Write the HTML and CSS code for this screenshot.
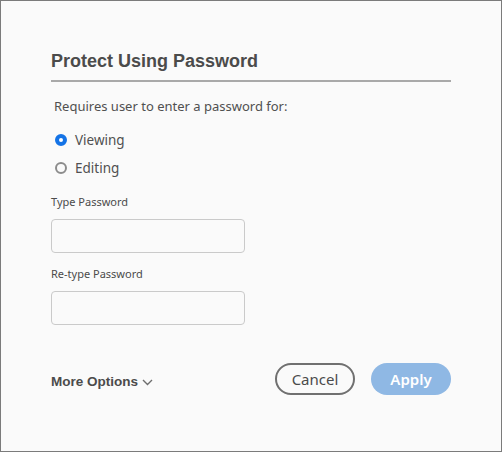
FILE: index.html
```html
<!DOCTYPE html>
<html>
<head>
<meta charset="utf-8">
<link rel="stylesheet" href="styles.css">
</head>
<body>
<div class="dialog">
  <h1 class="title">Protect Using Password</h1>
  <p class="intro">Requires user to enter a password for:</p>
  <div class="radios">
    <label class="radio"><span class="dot checked"></span><span>Viewing</span></label>
    <label class="radio"><span class="dot"></span><span>Editing</span></label>
  </div>
  <div class="field">
    <div class="label">Type Password</div>
    <div class="input"></div>
  </div>
  <div class="field">
    <div class="label">Re-type Password</div>
    <div class="input"></div>
  </div>
  <div class="footer">
    <div class="more">More Options
      <svg class="chev" width="11" height="7" viewBox="0 0 11 7"><path d="M1 1 L5.5 5.5 L10 1" fill="none" stroke="#6e6e6e" stroke-width="1.4"/></svg>
    </div>
    <div class="buttons">
      <button class="btn cancel">Cancel</button>
      <button class="btn apply">Apply</button>
    </div>
  </div>
</div>
</body>
</html>
```
FILE: styles.css
```css
html, body { margin: 0; padding: 0; }
body { width: 502px; height: 452px; overflow: hidden; }
.dialog {
  box-sizing: border-box;
  width: 502px; height: 452px;
  border: 1px solid #7b7b7b;
  background: #fafafa;
  padding: 49px 50px 0 50px;
  font-family: "Noto Sans", "Open Sans", sans-serif;
  color: #505050;
}
.title {
  margin: 0;
  font-family: "Liberation Sans", Arial, sans-serif;
  font-weight: bold;
  font-size: 18px;
  line-height: 22px;
  color: #4b4b4b;
  padding-bottom: 8px;
  border-bottom: 2px solid #a9a9a9;
}
.intro {
  margin: 14px 0 0 3px;
  font-size: 13px;
  line-height: 20px;
}
.radios { margin-top: 14px; display: flex; flex-direction: column; gap: 8px; }
.radio { display: flex; align-items: center; gap: 8px; font-size: 13.5px; line-height: 20px; padding-left: 4px; }
.dot {
  box-sizing: border-box;
  width: 12px; height: 12px; border-radius: 50%;
  border: 2px solid #8c8c8c;
  background: #fafafa;
}
.dot.checked { border: 4px solid #1473e6; background: #fff; }
.field { margin-top: 16px; }
.field + .field { margin-top: 13px; }
.label { font-size: 11px; line-height: 16px; color: #4b4b4b; }
.input {
  box-sizing: border-box;
  margin-top: 9px;
  width: 194px; height: 34px;
  border: 1px solid #cacaca;
  border-radius: 4px;
  background: #fafafa;
}
.footer {
  margin-top: 38px;
  display: flex; align-items: center; justify-content: space-between;
}
.more {
  font-family: "Liberation Sans", Arial, sans-serif;
  font-weight: bold; font-size: 13.5px; color: #4b4b4b;
  display: flex; align-items: center; gap: 4px;
  margin-top: 4px;
}
.chev { margin-top: 2px; }
.buttons { display: flex; gap: 16px; }
.btn {
  box-sizing: border-box;
  width: 80px; height: 32px; border-radius: 16px;
  font-family: "Noto Sans", "Open Sans", sans-serif;
  font-size: 15px; padding: 0; cursor: default;
}
.cancel { background: #fafafa; border: 2px solid #707070; color: #4b4b4b; }
.apply { background: #8fb8e4; border: none; color: #fff; font-weight: 600; }
```
